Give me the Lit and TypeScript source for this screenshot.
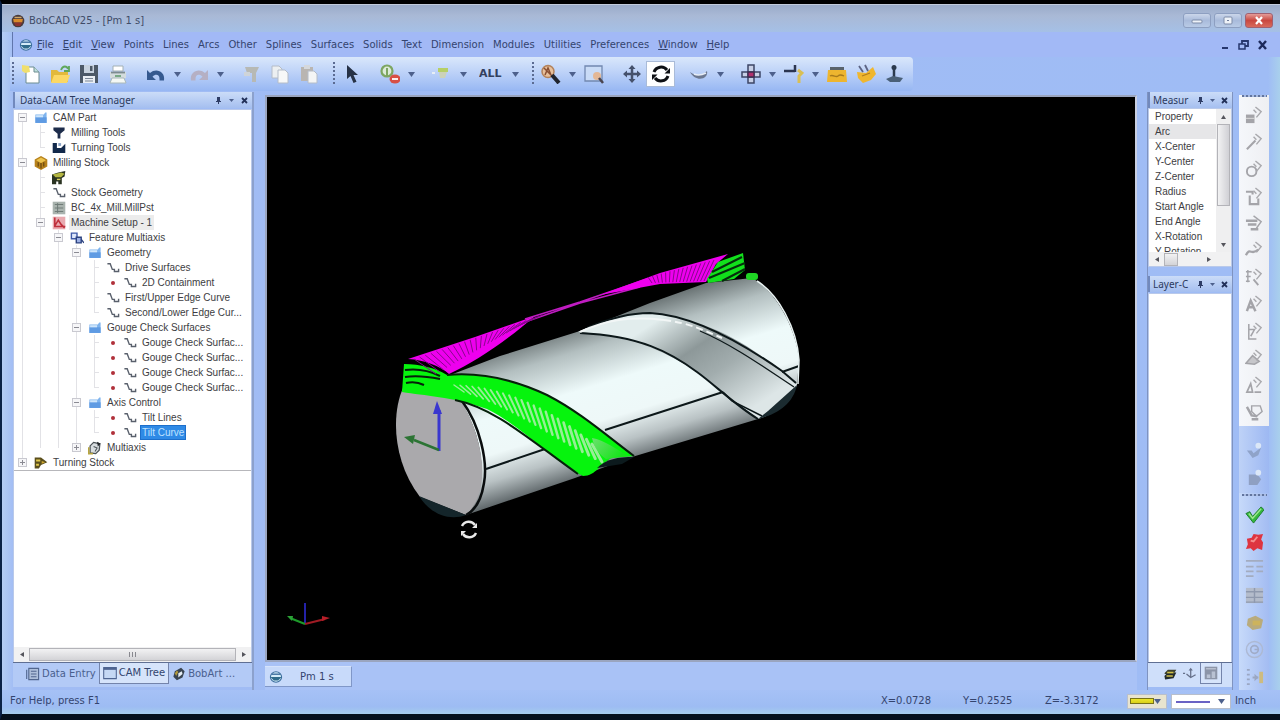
import { LitElement, html, svg, css, nothing } from "lit";
import { customElement } from "lit/decorators.js";
import { classMap } from "lit/directives/class-map.js";

/* ---------- glyphs, drawn on a 20 x 20 grid ---------- */
const G: Record<string, unknown> = {
  app: svg`<circle cx="10" cy="10" r="9" fill="#4b3b3a"/><path d="M3 7h14l-1 5H4z" fill="#d98b2b"/><path d="M4 12h12l-3 5H7z" fill="#8c3430"/><path d="M5 5h10" stroke="#cfa86a" stroke-width="2"/>`,
  doc: svg`<ellipse cx="10" cy="10" rx="8" ry="7.5" fill="#d4ecf8" stroke="#3c6e9e" stroke-width="1.6"/><path d="M2 10h16l-5 5H7z" fill="#2f6b8a"/><path d="M4 6h12" stroke="#3c6e9e" stroke-width="2"/>`,
  new: svg`<path d="M5 3h8l5 5v11H5z" fill="#fff" stroke="#6d8d92"/><path d="M13 3v5h5" fill="#bfe0da" stroke="#6d8d92"/><path d="M1 1l7 1 1 6-5 1-3-2z" fill="#f0df6e"/>`,
  open: svg`<path d="M1 6h6l2 2h9v10H1z" fill="#e2b93c"/><path d="M4 11h16l-3 8H1z" fill="#fbd865"/><path d="M11 6c2-5 6-4 7-1m1-3v5h-5" fill="none" stroke="#5fa85c" stroke-width="1.8"/>`,
  save: svg`<path d="M1 1h18v18H1z" fill="#4c5968"/><path d="M5 1h10v8H5z" fill="#c7d2df"/><path d="M11 2h2.500v5H11z" fill="#4c5968"/><path d="M4 12h12v7H4z" fill="#e9eef4"/><path d="M6 14.500h8M6 17h8" stroke="#7b8796"/>`,
  print: svg`<path d="M5 2h10v5H5z" fill="#fff" stroke="#a3b0b4"/><path d="M2 8h16v6H2z" fill="#d3dcdd"/><path d="M3 8.500h14" stroke="#7d8b90" stroke-width="1.800"/><path d="M4 14h12l2 5H2z" fill="#f4f8f4" stroke="#aab8b8"/><path d="M7 12h6" stroke="#6fa37c" stroke-width="1.800"/>`,
  undo: svg`<path d="M1 6v10h9l-3.500-3.300c3-3 7-2.500 7 2.300v1.500h4.500c1.500-9-8-13-14-7.500z" fill="#35598f"/>`,
  redo: svg`<path d="M19 6v10h-9l3.500-3.300c-3-3-7-2.500-7 2.300v1.500H2c-1.500-9 8-13 14-7.500z" fill="#b5b0c4"/>`,
  cut: svg`<path d="M4 3h14l-3 6v9h-4V9H6z" fill="#b7b9b4"/><path d="M3 8h6v4H3z" fill="#cfd4d8"/>`,
  copy: svg`<path d="M2 2h7l3 3v9H2z" fill="#eceff1" stroke="#b4bcc8"/><path d="M8 6h7l3 3v10H8z" fill="#f7f8f8" stroke="#b4bcc8"/>`,
  paste: svg`<path d="M2 3h12v14H2z" fill="#b9b5b1"/><path d="M5 1h6v4H5z" fill="#d5d8dc"/><path d="M9 7h6l3 3v9H9z" fill="#f4f5f5" stroke="#b4bcc8"/>`,
  cursor: svg`<path d="M5 1v14l3.500-3 3 7 3-1.300-3-6.700H16z" fill="#273246"/>`,
  snap: svg`<circle cx="7" cy="7" r="5.500" fill="#dcebd8" stroke="#7da661" stroke-width="2.200"/><path d="M7 4v8" stroke="#7da661" stroke-width="2"/><ellipse cx="15" cy="15" rx="5.500" ry="4.500" fill="#d84f45"/><path d="M12 15h6" stroke="#fff" stroke-width="1.800"/>`,
  layer: svg`<path d="M0 9h3" stroke="#e7eef6" stroke-width="2"/><path d="M6 4h10v4H6z" fill="#b6cf66"/><path d="M7 8h8l-2 6H8z" fill="#ccd2b8"/>`,
  zoom: svg`<circle cx="7" cy="7.500" r="6" fill="#e7c09c" stroke="#b3835c" stroke-width="1.500"/><path d="M4 11l3-7 3 7M3 4l8 8" fill="none" stroke="#8a4f32" stroke-width="1.500"/><path d="M11 11l7 8" stroke="#20242e" stroke-width="4"/>`,
  zoomwin: svg`<path d="M1 2h17v15H1z" fill="#c9dbf6" stroke="#7288b0" stroke-width="1.300"/><circle cx="13" cy="12" r="4" fill="#e3b795"/><path d="M15 14l4 5" stroke="#4a4550" stroke-width="2.500"/>`,
  pan: svg`<path d="M10 3v14M3 10h14" stroke="#45516c" stroke-width="2.500"/><path d="M10 1l3.500 4h-7zM10 19l3.500-4h-7zM1 10l4-3.500v7zM19 10l-4-3.500v7z" fill="#45516c"/>`,
  rotate: svg`<path d="M3 8a7.500 7.500 0 0 1 13-2M17 12a7.500 7.500 0 0 1-13 2" fill="none" stroke="#0c0f14" stroke-width="3"/><path d="M19 4v5.500h-5.500zM1 16v-5.500h5.500z" fill="#0c0f14"/>`,
  shade: svg`<path d="M1 8c5 4 12 4 17-1 2 8-11 12-17 1z" fill="#6c7890"/><path d="M5 10c4 2 8 1 12-1" stroke="#e7edf6" stroke-width="1.500" fill="none"/>`,
  views: svg`<path d="M7 1h6v18H7zM1 8h18v5H1z" fill="#c8d0e6" stroke="#3d4665" stroke-width="1.500"/><path d="M7 8h6v5H7z" fill="#b0306c" stroke="#3d2c50" stroke-width="1.300"/>`,
  wcs: svg`<path d="M0 7h11M11 1v7" stroke="#2b3550" stroke-width="2.500"/><path d="M14 6l4 3-3 3v7" fill="none" stroke="#d9bf53" stroke-width="3"/>`,
  box: svg`<path d="M3 3h14v3H3z" fill="#59636c"/><path d="M1 6h18l1 12H0z" fill="#edb52f"/><path d="M3 12c3-2 6 2 8 0s4-1 6 0" fill="none" stroke="#a87b1d" stroke-width="1.300"/>`,
  tools: svg`<path d="M1 8l9 1 7-6 3 7-5 6-8 3-5-5z" fill="#efb62e"/><path d="M3 2l4 6M9 1l3 6" stroke="#5c6484" stroke-width="1.800"/><path d="M6 12l8-3" stroke="#b17d1b" stroke-width="1.300"/>`,
  probe: svg`<circle cx="9" cy="3.500" r="2.500" fill="#2b3a4e"/><path d="M9 3v12" stroke="#2b3a4e" stroke-width="2.500"/><path d="M1 15l7-3 10 2-3 4H5z" fill="#4a6078"/>`,
  folder: svg`<path d="M2 5h12l2-3h2v15H2z" fill="#7fb4ee"/><path d="M2 9h16v8H2z" fill="#5f9be3"/><path d="M3 6h10v3H3z" fill="#cfe6fb"/>`,
  mill: svg`<path d="M2 2h16v4l-6 5v7H8v-7L2 6z" fill="#1d2c4b"/>`,
  turn: svg`<path d="M1 3h6v7h6l6-6v13H1z" fill="#12294b"/><path d="M9 3h4v4H9z" fill="#8aa2c4"/>`,
  stock: svg`<path d="M10 0l9 5v10l-9 5-9-5V5z" fill="#b7821c"/><path d="M10 2l7 4-7 4-7-4z" fill="#ecc34e"/><path d="M6 9v6M10 10v8M14 9v6" stroke="#5d3f10" stroke-width="1.500"/>`,
  machine: svg`<path d="M0 5l9-3 10-2-1 8-4 2v9H9v-4H6v4H0v-8z" fill="#2a3322"/><path d="M1 5l12-3 5 2-5 5H5z" fill="#b5b742"/><path d="M7 12h5" stroke="#d9d060" stroke-width="2"/>`,
  curve: svg`<path d="M2 4h4l3 8h3v3h6v-4" fill="none" stroke="#59606c" stroke-width="2"/>`,
  grid: svg`<path d="M1 1h18v18H1z" fill="#a9b3ae"/><path d="M4 5h12M4 10h12M4 15h12M8 3v14" stroke="#6f7b77" stroke-width="1.400"/>`,
  setup: svg`<path d="M1 1h18v18H1z" fill="#e9aab0"/><path d="M4 2v13h15M4 14l5-8 4 6 5 5" fill="none" stroke="#c0303c" stroke-width="2.200"/>`,
  feature: svg`<path d="M2 3h8v8H2z" fill="#dfe8fa" stroke="#3f5aa8" stroke-width="2"/><path d="M9 9h7v8H9z" fill="#9eb2e6" stroke="#2c427f" stroke-width="2"/><path d="M16 12l4 5" stroke="#2c427f" stroke-width="2"/>`,
  multi: svg`<path d="M3 7l5-5 9 2-1 9-5 5-8-1z" fill="#d8dde0" stroke="#4c5358" stroke-width="1.800"/><path d="M1 9v9h6" stroke="#b7a540" stroke-width="2.500" fill="none"/><path d="M13 1l5 3-4 4z" fill="#23272b"/><path d="M8 8l5 2-3 5" fill="none" stroke="#4c5358" stroke-width="1.500"/>`,
  lathe: svg`<path d="M1 2h9l9 7-9 4-3 5H1z" fill="#5a4e1c"/><path d="M3 5h6v3H3zM3 11h4v3H3z" fill="#e3c94b"/><path d="M11 7l5 2-5 2z" fill="#d0a930"/>`,
  entry: svg`<path d="M4 2h14v16H4z" fill="#aebfda" stroke="#51668e" stroke-width="1.600"/><path d="M7 6h8M7 10h8M7 14h8M1 4v13" stroke="#51668e" stroke-width="1.600"/>`,
  window: svg`<path d="M1 2h18v16H1z" fill="#c5d8f4" stroke="#4e6491" stroke-width="1.500"/><path d="M1 4h18" stroke="#4e6491" stroke-width="3"/>`,
  art: svg`<path d="M4 6l9-5 5 5-3 9-8 4-5-5z" fill="#394451"/><path d="M9 9l5-3 1 4-6 5z" fill="#e5edf3"/><path d="M4 9l3-4 2 2-3 6z" fill="#b49b3b"/>`,
  layers: svg`<path d="M2 13l5-5h12l-4 8-12 2z" fill="#222a2c"/><path d="M2 9l5-5h12l-4 6H3z" fill="#3b3f2c"/><path d="M6 8h9M5 13h9" stroke="#cfc04a" stroke-width="2.200"/>`,
  axes: svg`<path d="M11 3v12M5 10l6 5 7-4M0 9h3" fill="none" stroke="#66708a" stroke-width="1.800"/><path d="M8 5l3-4 3 4z" fill="#66708a"/>`,
  panel: svg`<path d="M1 1h18v18H1z" fill="#8c95a8"/><path d="M4 12h5v5H4zM11 8h5v9h-5z" fill="#b9c2d3"/><path d="M3 4h14" stroke="#c9d0de" stroke-width="1.500"/>`,
  ok: svg`<path d="M1 9l4-2 3 5 9-10 3 3L9 19z" fill="#35b83e" stroke="#1c7a2c"/><path d="M4 9l4 5L17 4" stroke="#9be58c" stroke-width="1.500" fill="none"/>`,
  cancel: svg`<path d="M2 7l5-1 2-4 5 1 5-1-2 6 2 3-1 8-5-2-4 3-3-3-5 1 2-5z" fill="#de3440"/><path d="M6 9l3 1 4-5" stroke="#f58c8c" stroke-width="2" fill="none"/>`,
};

const SHAPE = "#a4a4a9";
const arrowHead = svg`<path d="M11 1l6 5-5 6M9 4l3 3" fill="none" stroke="#a9a9ad" stroke-width="1.500"/>`;
const S: unknown[] = [
  svg`<path d="M1 9h9v9H1z" fill="${SHAPE}"/><path d="M1 13h9" stroke="#ddd"/>${arrowHead}`,
  svg`<path d="M2 17l9-9" stroke="${SHAPE}" stroke-width="2.200"/>${arrowHead}`,
  svg`<circle cx="7" cy="12" r="5" fill="none" stroke="${SHAPE}" stroke-width="2"/>${arrowHead}`,
  svg`<path d="M1 5h7v3M5 9v9h9v-6" fill="none" stroke="${SHAPE}" stroke-width="2.200"/>${arrowHead}`,
  svg`<path d="M1 7h12M3 11h9M6 16h8" stroke="${SHAPE}" stroke-width="2.600"/><path d="M9 2l8 6-5 7" fill="none" stroke="${SHAPE}" stroke-width="1.500"/>`,
  svg`<path d="M1 15c4-9 6 1 13-6" fill="none" stroke="${SHAPE}" stroke-width="2.400"/>${arrowHead}`,
  svg`<path d="M1 4h6M1 9h5M1 14h4M3 2v13" stroke="${SHAPE}" stroke-width="1.500"/><path d="M9 12l5 6" stroke="${SHAPE}" stroke-width="2"/>${arrowHead}`,
  svg`<path d="M2 17l4-11 5 11M4 13h5" fill="none" stroke="${SHAPE}" stroke-width="2.600"/>${arrowHead}`,
  svg`<path d="M4 2v16h8M4 8h6l-4 7" fill="none" stroke="${SHAPE}" stroke-width="1.600"/>${arrowHead}`,
  svg`<path d="M1 15L8 7l7 6-5 3z" fill="#c6c6ca" stroke="${SHAPE}" stroke-width="1.600"/>${arrowHead}`,
  svg`<path d="M2 17l4-9 2 9zM10 17h7" fill="none" stroke="${SHAPE}" stroke-width="1.800"/>${arrowHead}`,
  svg`<path d="M2 4l5 9 6 1M7 17h7" fill="none" stroke="${SHAPE}" stroke-width="2.600"/><path d="M7 3h9l2 6-6 5-5-5z" fill="none" stroke="${SHAPE}" stroke-width="1.500"/>`,
];
const S2: unknown[] = [
  svg`<path d="M2 11h5l2 3 8-6-3 8-6 3z" fill="#8fa3c9"/><circle cx="14" cy="6" r="3" fill="#dbe7f7"/>`,
  svg`<path d="M4 8h9l4 5-4 6H4z" fill="#8fa0c2"/><circle cx="14" cy="6" r="3" fill="#dbe7f7"/>`,
];
const S3: unknown[] = [
  G.ok, G.cancel,
  svg`<path d="M1 2h18M1 8h8M12 8h7M1 13h8M12 13h7M1 18h8" stroke="#a3acc0" stroke-width="2"/>`,
  svg`<path d="M1 2h18v16H1z" fill="#b4bccb"/><path d="M1 6h18M1 12h18M1 17h18M10 2v16" stroke="#8f99ae" stroke-width="1.500"/>`,
  svg`<path d="M3 6l8-3 8 4-2 9-9 2-6-5z" fill="#b9ab7c"/><path d="M8 8h8v5H8z" fill="#cdb35c"/>`,
  svg`<circle cx="10" cy="10" r="8.500" fill="none" stroke="#adb9d3" stroke-width="1.500"/><circle cx="10" cy="10" r="4" fill="none" stroke="#a0acc8" stroke-width="1.800"/><path d="M10 10h4" stroke="#a0acc8" stroke-width="1.500"/>`,
  svg`<path d="M2 3h3M2 8h3M2 13h3M2 18h3M8 11h6" stroke="#9ba7c2" stroke-width="2"/><path d="M10 7l4 4-4 4z" fill="#9ba7c2"/><path d="M15 5h4v12h-4z" fill="#cdbb80"/>`,
];

const glyph = (body: unknown, cls = "ic") =>
  html`<svg class=${cls} viewBox="0 0 20 20" aria-hidden="true">${body}</svg>`;
const caret = html`<svg class="caret" viewBox="0 0 7 5" aria-hidden="true"><path d="M0 0h7L3.500 5z" fill="#4d608c"/></svg>`;

/* ---------- data ---------- */
const MENUS: [string, boolean][] = [
  ["File", true], ["Edit", true], ["View", true], ["Points", false], ["Lines", false],
  ["Arcs", false], ["Other", false], ["Splines", false], ["Surfaces", false], ["Solids", false],
  ["Text", false], ["Dimension", false], ["Modules", false], ["Utilities", false],
  ["Preferences", false], ["Window", true], ["Help", true],
];

/* "|" thin gap, "#" grip, trailing "+" adds a drop arrow */
const TOOLS = [
  "new", "open", "save", "print", "|", "undo+", "redo+", "|", "cut", "copy", "paste", "#",
  "cursor", "|", "snap+", "|", "layer+", "|", "ALL", "#", "zoom+", "zoomwin", "|", "pan",
  "rotate", "|", "shade+", "|", "views+", "wcs+", "box", "tools", "probe",
];

interface Node {
  t: string; i: string; open?: boolean; closed?: boolean; dot?: boolean;
  hot?: boolean; sel?: boolean; kids?: Node[];
}
const gouge = (): Node => ({ t: "Gouge Check Surfac...", i: "curve", dot: true });
const TREE: Node[] = [
  { t: "CAM Part", i: "folder", open: true, kids: [
    { t: "Milling Tools", i: "mill" }, { t: "Turning Tools", i: "turn" } ] },
  { t: "Milling Stock", i: "stock", open: true, kids: [
    { t: "", i: "machine" },
    { t: "Stock Geometry", i: "curve" },
    { t: "BC_4x_Mill.MillPst", i: "grid" },
    { t: "Machine Setup - 1", i: "setup", open: true, hot: true, kids: [
      { t: "Feature Multiaxis", i: "feature", open: true, kids: [
        { t: "Geometry", i: "folder", open: true, kids: [
          { t: "Drive Surfaces", i: "curve" },
          { t: "2D Containment", i: "curve", dot: true },
          { t: "First/Upper Edge Curve", i: "curve" },
          { t: "Second/Lower Edge Cur...", i: "curve" } ] },
        { t: "Gouge Check Surfaces", i: "folder", open: true, kids: [gouge(), gouge(), gouge(), gouge()] },
        { t: "Axis Control", i: "folder", open: true, kids: [
          { t: "Tilt Lines", i: "curve", dot: true },
          { t: "Tilt Curve", i: "curve", dot: true, sel: true } ] },
        { t: "Multiaxis", i: "multi", closed: true } ] } ] } ] },
  { t: "Turning Stock", i: "lathe", closed: true },
];
const PROPS = ["Arc", "X-Center", "Y-Center", "Z-Center", "Radius", "Start Angle", "End Angle", "X-Rotation", "Y-Rotation"];

/* ---------- part view ---------- */
const lerp = (a: number, b: number, t: number) => a + (b - a) * t;
const bez = (p: number[][], t: number) => {
  const u = 1 - t;
  return [0, 1].map((k) => u * u * u * p[0][k] + 3 * u * u * t * p[1][k] + 3 * u * t * t * p[2][k] + t * t * t * p[3][k]);
};
const FLUTE_TOP = [[454, 385], [500, 386], [550, 408], [592, 444]];
const FLUTE_LOW = [[464, 392], [515, 408], [550, 436], [602, 462]];
const pale = Array.from({ length: 24 }, (_, n) => {
  const t = n / 23;
  const a = bez(FLUTE_TOP, t), b = bez(FLUTE_LOW, t);
  return svg`<line x1=${a[0]} y1=${a[1]} x2=${b[0]} y2=${b[1]} stroke-width=${lerp(1.5, 3, t)}/>`;
});
const rulesLeft = Array.from({ length: 24 }, (_, n) => {
  const t = n / 26;
  return svg`<line x1=${lerp(414, 560, t)} y1=${lerp(359, 309, t)} x2=${lerp(444, 540, t) - 8} y2=${lerp(374, 318, t)}/>`;
});
const rulesRight = Array.from({ length: 16 }, (_, n) => {
  const t = n / 15;
  return svg`<line x1=${lerp(648, 714, t)} y1=${lerp(277, 260, t)} x2=${lerp(652, 704, t)} y2=${lerp(283, 281, t)}/>`;
});

const partView = html`<svg class="scene" viewBox="267 97 868 563" role="img" aria-label="Part view">
  <defs>
    <linearGradient id="body" gradientUnits="userSpaceOnUse" x1="575" y1="320" x2="620" y2="466">
      <stop offset="0" stop-color="#5f6869"/><stop offset=".2" stop-color="#b3bfc0"/>
      <stop offset=".45" stop-color="#eefafa"/><stop offset=".68" stop-color="#eef8f8"/>
      <stop offset=".85" stop-color="#b9c2c4"/><stop offset="1" stop-color="#636b6e"/>
    </linearGradient>
    <linearGradient id="slot" gradientUnits="userSpaceOnUse" x1="665" y1="315" x2="735" y2="420">
      <stop offset="0" stop-color="#e2eded"/><stop offset=".35" stop-color="#8d9899"/>
      <stop offset=".6" stop-color="#a2adae"/><stop offset="1" stop-color="#dde6e7"/>
    </linearGradient>
    <linearGradient id="tip" gradientUnits="userSpaceOnUse" x1="590" y1="440" x2="615" y2="462">
      <stop offset="0" stop-color="#9ad79a"/><stop offset="1" stop-color="#1fdc22"/>
    </linearGradient>
  </defs>
  <path fill="url(#body)" d="M445 377L500 356 580 331 650 303 706 283 752 278C774 290 796 326 799 360L797 385C790 402 775 412 758 419L632 457 575 478 466 515C488 495 488 440 458 398Z"/>
  <path fill="url(#slot)" d="M578 332C604 319 630 313 650 313 685 315 725 330 760 355L797 385C788 404 775 414 758 419 735 402 720 388 697 372 665 350 625 335 578 332Z"/>
  <path fill="#1b2b30" d="M797 385C793 404 778 414 758 419L768 411Z"/>
  <g fill="none" stroke="#0c1719" stroke-width="2">
    <path d="M580 333C640 336 670 352 697 372 715 385 735 405 758 419"/>
    <path d="M723 392L732 401 762 416" stroke-width="1.500"/>
    <path d="M587 328C610 318 630 313 650 313 690 315 735 338 782 371L796 383" />
    <path d="M700 331C735 346 765 368 794 387" stroke-width="1.300"/>
    <path d="M605 430L723 392M486 469L545 449M782 372L799 366"/>
  </g>
  <path d="M580 332C605 320 630 316 664 320" fill="none" stroke="#f2f6f6" stroke-width="2"/>
  <path d="M664 320C690 323 705 331 722 338" fill="none" stroke="#f2f6f6" stroke-width="2" stroke-dasharray="7 4"/>
  <path d="M757 281C778 294 797 328 799 360L798 384" fill="none" stroke="#e8f2f2" stroke-width="1.500"/>
  <path fill="#aaa9ac" d="M403 388C391 415 393 462 420 497L466 515C489 495 488 445 460 399Z"/>
  <path d="M462 401C480 425 488 462 484 483 481 502 474 511 466 515" fill="none" stroke="#0a0d0e" stroke-width="2.500"/>
  <path fill="#14252a" d="M419 496L466 515C450 521 431 515 419 496Z"/>
  <path fill="#06f40d" d="M404 364C420 364 436 368 447 375 480 372 515 380 547 395 580 412 606 435 634 456L612 458C602 462 596 476 583 476 555 462 520 425 487 409 450 396 425 396 402 392Z"/>
  <g stroke="#c9ecc6" stroke-opacity=".75" stroke-linecap="round">${pale}</g>
  <path fill="url(#tip)" opacity=".7" d="M592 438C604 440 618 450 628 456L606 459C600 455 594 448 592 438Z"/>
  <path fill="#0c1a1d" d="M597 468C606 459 618 457 634 457L622 464Z"/>
  <g fill="none" stroke="#06200a" stroke-width="2">
    <path d="M447 375C480 372 515 380 547 395 580 412 606 435 634 456"/>
    <path d="M455 400C495 408 530 440 578 474"/>
    <path d="M405 370C420 368 432 372 440 376M405 377C418 375 430 377 440 379M406 383C414 381 420 383 424 385"/>
  </g>
  <path fill="#ee00ee" d="M408 359L475 337 535 316C505 342 475 362 449 374 440 366 425 360 408 359Z"/>
  <path d="M525 319L580 302 650 278M525 322L580 303 640 287" stroke="#c01cc2" stroke-width="1.500" fill="none"/>
  <path fill="#ee00ee" d="M600 295L660 273 728 254 716 264 706 282 660 284Z"/>
  <g stroke="#86088c" stroke-width="1">${rulesLeft}${rulesRight}</g>
  <path fill="#12e01c" d="M718 262L743 253 745 270 734 279 708 283 707 279Z"/>
  <path d="M712 272L742 257M709 278L745 263M722 281L745 269" stroke="#052e0c" stroke-width="2"/>
  <rect x="746" y="273" width="12" height="7" rx="3" fill="#1fd524"/>
  <path d="M439 451V410" stroke="#3a37cf" stroke-width="3"/><path d="M437 401l5 13h-9z" fill="#3a37cf"/>
  <path d="M439 450L414 440" stroke="#2c7434" stroke-width="2.500"/><path d="M404 437l11-2-2 9z" fill="#2c7434"/>
  <path d="M305 624V603" stroke="#2422a8" stroke-width="2"/><path d="M305 624L290 618" stroke="#1d9a2a" stroke-width="2"/>
  <path d="M305 624L325 619" stroke="#a01b24" stroke-width="2"/><path d="M287 616l6 0-1 5z" fill="#2ba336"/><path d="M330 618l-8-2v5z" fill="#b81e28"/>
  <g fill="none" stroke="#e9e9e9" stroke-width="2.500">
    <path d="M462 526A7.500 7.500 0 0 1 475 525M476 533A7.500 7.500 0 0 1 463 534"/>
  </g>
  <path d="M477 523v5h-5zM461 536v-5h5z" fill="#e9e9e9"/>
</svg>`;

@customElement("app-root")
export class AppRoot extends LitElement {
  static styles = css`
    :host {
      display: flex; flex-direction: column; box-sizing: border-box; min-height: 100vh;
      border-top: 4px solid #000; border-bottom: 6px solid #04101c; border-left: 2px solid #0b2247;
      background: linear-gradient(90deg, #b4cdf5, #a1bcf4 12px, #9fbcf5 calc(100% - 12px), #a9d0ec);
      font: 10px/14px "DejaVu Sans", sans-serif; color: #34446e;
    }
    * { box-sizing: border-box; }
    button, select { font: inherit; color: inherit; border: 0; padding: 0; margin: 0; background: none; appearance: none; border-radius: 0; }
    a { color: inherit; text-decoration: none; }
    ul { list-style: none; margin: 0; padding: 0; }
    .ic { width: 20px; height: 20px; display: block; flex: none; }
    .ic.sm { width: 14px; height: 14px; }
    .caret { width: 7px; height: 5px; display: block; flex: none; }

    .title { display: flex; align-items: center; gap: 4px; height: 28px; padding: 4px 7px 0 9px;
      background: linear-gradient(#9aabc9, #a9b9d6 40%, #a5c0e6); border-top: 1px solid #c2cbdc; }
    .title h1 { font-size: 10px; font-weight: 400; line-height: 14px; margin: 0; flex: 1; color: #3f4c68; }
    .wins { display: flex; gap: 3px; }
    .wins button { width: 28px; height: 15px; border: 1px solid #8d9fc1; border-radius: 3px; display: grid; place-items: center;
      background: linear-gradient(#cbd6ea, #a9bbdb 50%, #b9cbe6); }
    .wins .x { background: linear-gradient(#e59c98, #c94840 50%, #d86a5c); border-color: #a06070; }
    .wins svg { width: 14px; height: 9px; display: block; }

    .menu { display: flex; align-items: center; height: 25px; margin-left: 10px; padding: 0 12px 0 0; border-left: 1px solid #6076ac;
      background: #a2b9f6; }
    .menu ul { display: flex; gap: 9px; flex: 1; padding-left: 4px; }
    .menu .ic { margin-left: 6px; }
    .mdi { display: flex; gap: 8px; }
    .mdi svg { width: 11px; height: 10px; display: block; }

    .bars { display: flex; height: 35px; padding-left: 8px; }
    .tools { display: flex; align-items: center; height: 34px; padding-right: 4px; border-radius: 0 4px 4px 0;
      background: linear-gradient(#d9e7fb, #bdd2f8 45%, #97b7f3); }
    .tools button { width: 29px; height: 26px; display: grid; place-items: center; }
    .tools .drop { width: 14px; }
    .tools .on { background: #fdfeff; outline: 1px solid #a9bbd8; outline-offset: -1px; }
    .gap { width: 9px; height: 22px; }
    .grip { width: 14px; height: 24px; padding-left: 10px; }
    .grip::before { content: ""; display: block; width: 2px; height: 24px; background: repeating-linear-gradient(#5b6b92 0 2px, transparent 2px 4px); }
    .grip.first { width: 6px; padding-left: 2px; }
    .all { display: grid; grid-template-columns: 29px 14px; align-items: center; }
    .all select { grid-area: 1 / 1 / 2 / 3; font-weight: 700; color: #33405e; height: 24px; font-size: 11px; }
    .all .caret { grid-area: 1 / 2; justify-self: center; pointer-events: none; }

    .main { flex: 1; display: grid; grid-template-columns: 241px minmax(0, 1fr) 86px 37px; min-height: 0; padding: 0 10px 0 11px; }
    .col { display: flex; flex-direction: column; min-height: 0; min-width: 0; }
    .head { display: flex; align-items: center; gap: 6px; height: 16px; flex: none; padding: 0 4px 0 5px; background: linear-gradient(#cbdcf8, #a5bff0);
      border-left: 2px solid #7189bd; }
    .head h2 { font: 10px/14px "Noto Sans", sans-serif; margin: 0; flex: 1; white-space: nowrap; min-width: 0; color: #2c3a5e; }
    .head button { width: 7px; height: 7px; display: block; }
    .head svg { width: 7px; height: 7px; display: block; }
    .sheet { background: #fff; font: 10px/15px "Liberation Sans", sans-serif; color: #3d3d42; border: 1px solid #b9c9ea; }

    .left { border-right: 2px solid #8ca1cd; }
    .left .sheet { flex: 1; display: flex; flex-direction: column; min-height: 0; border-bottom: 0; margin-top: 1px; }
    .tree { margin: 0; padding: 0 0 0 2px; border-bottom: 1px solid #b7b7bb; flex: none; overflow: hidden;
      background: linear-gradient(#e2e2e6, #e2e2e6) 8px 8px / 1px calc(100% - 16px) no-repeat; }
    .tree ul { padding-left: 18px; background: linear-gradient(#e2e2e6, #e2e2e6) 24px 0 / 1px calc(100% - 7px) no-repeat; }
    .row { display: flex; align-items: center; height: 15px; white-space: nowrap; }
    .exp { width: 9px; height: 9px; flex: none; margin: 0 7px 0 2px; background: linear-gradient(#e2e2e6, #e2e2e6) 4px 4px / 5px 1px no-repeat; }
    .exp.on { border: 1px solid #c9c9d0; background: linear-gradient(#8b8b93, #8b8b93) center / 5px 1px no-repeat #f6f6f8; }
    .exp.plus { background: linear-gradient(#8b8b93, #8b8b93) center / 5px 1px no-repeat, linear-gradient(#8b8b93, #8b8b93) center / 1px 5px no-repeat #f6f6f8; }
    .dot { width: 4px; height: 4px; border-radius: 2px; background: #b0303a; margin: 0 8px 0 5px; flex: none; }
    .txt { padding: 0 2px; margin-left: 3px; }
    .hot { background: #ececec; }
    .sel { background: #2f8ae6; color: #bfe2ff; outline: 1px solid #1d6fcb; outline-offset: -1px; }
    .spare { flex: 1; }
    .hs { display: flex; align-items: center; height: 15px; background: #f1f1f2; flex: none; }
    .hs i { width: 15px; flex: none; display: grid; place-items: center; }
    .hs svg, .vs svg { width: 4px; height: 5px; display: block; }
    .vs svg { width: 5px; height: 4px; }
    .thumb { flex: 1; height: 13px; border: 1px solid #b3b3b8; background: linear-gradient(#f2f2f3, #d3d3d7); display: grid; place-items: center; }
    .thumb::after { content: ""; width: 7px; height: 5px; background: repeating-linear-gradient(90deg, #88888f 0 1px, transparent 1px 3px); }
    .tabs { display: flex; height: 25px; flex: none; border-top: 1px solid #5f6f93; margin-bottom: 3px; background: #b3caf6; align-items: flex-start; }
    .tabs button { display: flex; align-items: center; gap: 2px; height: 21px; padding: 0 3px; white-space: nowrap; color: #4a5f8e; }
    .tabs .cur { background: #d6e4fb; border: 1px solid #7484ab; border-top: 0; color: #33446e; }
    .left .tabs { padding-left: 10px; }

    .mid { padding: 3px 10px 0 11px; }
    .view { flex: 1; min-height: 0; background: #000; border: 2px solid #9aa5bf; border-right-color: #c9cfe2; display: flex; }
    .scene { width: 100%; height: 100%; display: block; min-height: 0; }
    .docs { display: flex; height: 28px; flex: none; padding-top: 4px; background: #a9c2f6; }
    .docs button { display: flex; align-items: center; height: 21px; gap: 17px; padding: 0 17px 0 4px; background: #c8dafa; border: 1px solid #8097c8; border-top-color: #d6e3fb; border-left: 0; }

    .right { border-left: 1px solid #7f93c0; border-right: 1px solid #7f93c0; }
    .right .head { gap: 5px; padding: 0 4px 0 3px; }
    .measure { display: flex; height: 144px; overflow: hidden; border-bottom: 0; }
    .measure table { flex: 1; border-collapse: collapse; display: block; overflow: hidden; min-width: 0; }
    .measure th, .measure td { padding: 0 0 0 6px; font-weight: 400; text-align: left; height: 15px; line-height: 15px; white-space: nowrap; }
    .measure tbody, .measure thead, .measure tr { display: block; }
    .measure td { display: block; }
    .measure .cur { background: #e6e6e8; }
    .vs { width: 15px; flex: none; background: #efeff0; display: flex; flex-direction: column; align-items: center; }
    .vs i { height: 15px; display: grid; place-items: center; flex: none; }
    .vs .bar { width: 13px; height: 82px; border: 1px solid #b3b3b8; background: linear-gradient(90deg, #f2f2f3, #d0d0d5); }
    .vs .rest { flex: 1; }
    .short .thumb { flex: none; width: 14px; }
    .short .thumb::after { content: none; }
    .short .spare { align-self: stretch; }
    .hs.short { border: 1px solid #b9c9ea; border-top: 0; margin-bottom: 9px; padding-right: 15px; }
    .empty { flex: 1; border-bottom: 0; margin-top: 1px; }
    .right .tabs { padding-left: 12px; background: #cfdffa; }

    .dock { padding: 3px 0 0 6px; }
    .strip { display: flex; flex-direction: column; align-items: center; width: 30px; }
    .strip button { height: 27px; width: 30px; display: grid; place-items: center; }
    .strip .ic { width: 19px; height: 19px; }
    .strip::before { content: ""; width: 25px; height: 2px; margin: 0 0 5px; background: repeating-linear-gradient(90deg, #62759f 0 2px, #a9bbe0 2px 4px); flex: none; }
    .white { background: linear-gradient(90deg, #f5f7fb, #eeeff2); }
    .plain::before { content: none; }
    .plain { padding: 10px 0 3px; background: linear-gradient(90deg, #bed2f7, #9db8f2); }
    .low { padding-top: 1px; background: linear-gradient(90deg, #c7dafa, #a3bcf2); flex: 1; }

    .status { display: flex; align-items: center; height: 24px; padding: 0 24px 2px 8px; background: linear-gradient(#a6c1f6, #9dbcf3 70%, #a5cdec); }
    .status span { white-space: nowrap; }
    .status .help { flex: 1; }
    .status .num { width: 82px; }
    .combo { display: grid; align-items: center; height: 15px; background: #fff; border: 1px solid #b9bfcb; margin-right: 4px; }
    .combo select { grid-area: 1 / 1; width: 100%; height: 13px; }
    .combo .caret { grid-area: 1 / 1; justify-self: end; margin-right: 5px; pointer-events: none; }
    .pen { width: 40px; }
    .pen select { background: linear-gradient(#ece62c, #d9d019) 3px 4px / 22px 4px no-repeat, linear-gradient(#77721a, #77721a) 2px 3px / 24px 6px no-repeat #e8e4cf; }
    .line { width: 60px; }
    .line select { background: linear-gradient(#6a62c4, #6a62c4) 4px 6px / 34px 2px no-repeat; }
  `;

  private tool(name: string) {
    if (name === "|") return html`<span class="gap"></span>`;
    if (name === "#") return html`<span class="grip"></span>`;
    if (name === "ALL")
      return html`<label class="all"><select aria-label="Selection filter"><option>ALL</option></select>${caret}</label>`;
    const drop = name.endsWith("+");
    const id = drop ? name.slice(0, -1) : name;
    return html`<button class=${classMap({ on: id === "rotate" })} aria-label=${id}>${glyph(G[id])}</button>${drop
      ? html`<button class="drop" aria-label="${id} options">${caret}</button>` : nothing}`;
  }

  private node(n: Node): unknown {
    return html`<li>
      <div class="row">
        <span class=${classMap({ exp: true, on: !!(n.open || n.closed), plus: !!n.closed })}></span>
        ${n.dot ? html`<span class="dot"></span>` : nothing}
        ${glyph(G[n.i], "ic sm")}
        <span class=${classMap({ txt: true, hot: !!n.hot, sel: !!n.sel })}>${n.t}</span>
      </div>
      ${n.kids ? html`<ul>${n.kids.map((k) => this.node(k))}</ul>` : nothing}
    </li>`;
  }

  private head(title: string) {
    return html`<div class="head"><h2>${title}</h2>
      <button aria-label="Pin"><svg viewBox="0 0 7 7"><path d="M2 0h3v4h1v1H4v2H3V5H1V4h1z" fill="#2e3d66"/></svg></button>
      <button aria-label="Menu"><svg viewBox="0 0 7 7"><path d="M1 2h5L3.500 5z" fill="#4d608c"/></svg></button>
      <button aria-label="Close"><svg viewBox="0 0 7 7"><path d="M1 1l5 5M6 1L1 6" stroke="#223059" stroke-width="1.800"/></svg></button>
    </div>`;
  }

  private hscroll(short: boolean) {
    return html`<div class=${classMap({ hs: true, short })}>
      <i><svg viewBox="0 0 4 5"><path d="M4 0v5L0 2.500z" fill="#55555c"/></svg></i>
      <div class="thumb"></div>${short ? html`<span class="spare"></span>` : nothing}
      <i><svg viewBox="0 0 4 5"><path d="M0 0v5l4-2.500z" fill="#55555c"/></svg></i>
    </div>`;
  }

  private strip(icons: unknown[], cls: string) {
    return html`<div class="strip ${cls}">${icons.map((g, n) => html`<button aria-label="Tool ${n + 1}">${glyph(g)}</button>`)}</div>`;
  }

  render() {
    return html`
      <header class="title">
        ${glyph(G.app, "ic sm")}
        <h1>BobCAD V25 - [Pm 1 s]</h1>
        <div class="wins">
          <button aria-label="Minimize"><svg viewBox="0 0 14 9"><rect x="2" y="4" width="10" height="3" rx="1" fill="#eef2f8" stroke="#7c8ba8"/></svg></button>
          <button aria-label="Maximize"><svg viewBox="0 0 14 9"><rect x="3" y="1" width="8" height="7" rx="1" fill="#eef2f8" stroke="#7c8ba8"/><path d="M6 4h2v1H6z" fill="#6f7e9b"/></svg></button>
          <button class="x" aria-label="Close"><svg viewBox="0 0 14 9"><path d="M4 1l6 7M10 1L4 8" stroke="#fff" stroke-width="2.200"/></svg></button>
        </div>
      </header>

      <nav class="menu">
        ${glyph(G.doc, "ic sm")}
        <ul>${MENUS.map(([m, key]) => html`<li><a href="#">${key ? html`<u>${m[0]}</u>${m.slice(1)}` : m}</a></li>`)}</ul>
        <div class="mdi">
          <button aria-label="Minimize document"><svg viewBox="0 0 11 10"><path d="M3 7h6v2H3z" fill="#26376e"/></svg></button>
          <button aria-label="Restore document"><svg viewBox="0 0 11 10"><path d="M4 1h6v5H4z" fill="none" stroke="#26376e" stroke-width="1.800"/><path d="M1 4h6v5H1z" fill="#a2b9f6" stroke="#26376e" stroke-width="1.500"/></svg></button>
          <button aria-label="Close document"><svg viewBox="0 0 11 10"><path d="M2 1l7 8M9 1L2 9" stroke="#1c2a5c" stroke-width="2.400"/></svg></button>
        </div>
      </nav>

      <div class="bars"><div class="tools">
        <span class="grip first"></span>${TOOLS.map((t) => this.tool(t))}
      </div></div>

      <main class="main">
        <section class="col left">
          ${this.head("Data-CAM Tree Manager")}
          <div class="sheet">
            <ul class="tree">${TREE.map((n) => this.node(n))}</ul>
            <div class="spare"></div>
            ${this.hscroll(false)}
          </div>
          <div class="tabs">
            <button>${glyph(G.entry, "ic sm")}Data Entry</button>
            <button class="cur">${glyph(G.window, "ic sm")}CAM Tree</button>
            <button>${glyph(G.art, "ic sm")}BobArt ...</button>
          </div>
        </section>

        <section class="col mid">
          <div class="view">${partView}</div>
          <div class="docs"><button>${glyph(G.doc, "ic sm")}<span>Pm 1 s</span></button></div>
        </section>

        <section class="col right">
          ${this.head("Measur")}
          <div class="sheet measure">
            <table>
              <thead><tr><th>Property</th></tr></thead>
              <tbody>${PROPS.map((p, n) => html`<tr class=${n === 0 ? "cur" : ""}><td>${p}</td></tr>`)}</tbody>
            </table>
            <div class="vs">
              <i><svg viewBox="0 0 5 4"><path d="M0 4h5L2.500 0z" fill="#55555c"/></svg></i>
              <div class="bar"></div><span class="rest"></span>
              <i><svg viewBox="0 0 5 4"><path d="M0 0h5L2.500 4z" fill="#55555c"/></svg></i>
            </div>
          </div>
          ${this.hscroll(true)}
          ${this.head("Layer-C")}
          <div class="sheet empty"></div>
          <div class="tabs">
            <button aria-label="Layers">${glyph(G.layers, "ic sm")}</button>
            <button aria-label="Axes">${glyph(G.axes, "ic sm")}</button>
            <button class="cur" aria-label="Panel">${glyph(G.panel, "ic sm")}</button>
          </div>
        </section>

        <section class="col dock">
          ${this.strip(S, "white")}${this.strip(S2, "plain")}${this.strip(S3, "low")}
        </section>
      </main>

      <footer class="status">
        <span class="help">For Help, press F1</span>
        <span class="num">X=0.0728</span><span class="num">Y=0.2525</span><span class="num">Z=-3.3172</span>
        <label class="combo pen"><select aria-label="Pen colour"><option></option></select>${caret}</label>
        <label class="combo line"><select aria-label="Line style"><option></option></select>${caret}</label>
        <span>Inch</span>
      </footer>
    `;
  }
}
